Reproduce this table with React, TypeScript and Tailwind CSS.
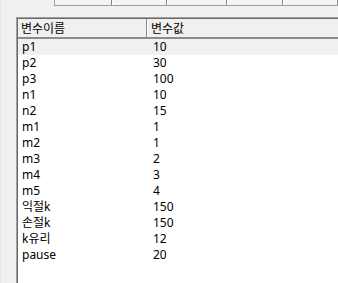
import React from "react";

const vars: [string, string][] = [
  ["p1", "10"],
  ["p2", "30"],
  ["p3", "100"],
  ["n1", "10"],
  ["n2", "15"],
  ["m1", "1"],
  ["m2", "1"],
  ["m3", "2"],
  ["m4", "3"],
  ["m5", "4"],
  ["익절k", "150"],
  ["손절k", "150"],
  ["k유리", "12"],
  ["pause", "20"],
];

// header cells of the list above, only the bottom edge shows
const topCols = [62, 60, 65, 60, 60];

const App = () => {
  return (
    <div
      className="w-[338px] h-[283px] bg-[#f0f0f0] overflow-hidden flex flex-col text-[12px] text-black border-l border-[#e6e6e6]"
      style={{ fontFamily: '"Noto Sans", "Noto Sans CJK KR", sans-serif' }}
    >
      <div className="ml-[53px] h-[6px] flex border-l border-b border-[#a0a0a0] bg-[#f4f4f4]">
        {topCols.map((w, i) => (
          <div key={i} className="h-full border-r border-[#8a8a8a] shadow-[1px_0_0_#ffffff]" style={{ width: w }} />
        ))}
      </div>

      <div className="mt-[11px] ml-[15px] flex-1 flex flex-col bg-white border-t border-l border-[#a0a0a0]">
        <div className="flex-1 flex flex-col border-t border-l border-[#696969]">
          {/* column header */}
          <div className="flex h-[20px] bg-[#f0f0f0] border-b-2 border-[#8c8c8c] leading-[19px]">
            <div className="w-[129px] pl-[3px] border-r border-[#8c8c8c] shadow-[1px_0_0_#ffffff]">변수이름</div>
            <div className="flex-1 pl-[4px]">변수값</div>
          </div>

          {vars.map(([name, val], i) => (
            <div
              key={name}
              className={`flex h-[16px] leading-[16px] ${i === 0 ? "bg-[#f0f0f0]" : ""}`}
            >
              <div className="w-[130px] pl-[4px]">{name}</div>
              <div className="flex-1 pl-[5px]">{val}</div>
            </div>
          ))}
        </div>
      </div>
    </div>
  );
};

export default App;
